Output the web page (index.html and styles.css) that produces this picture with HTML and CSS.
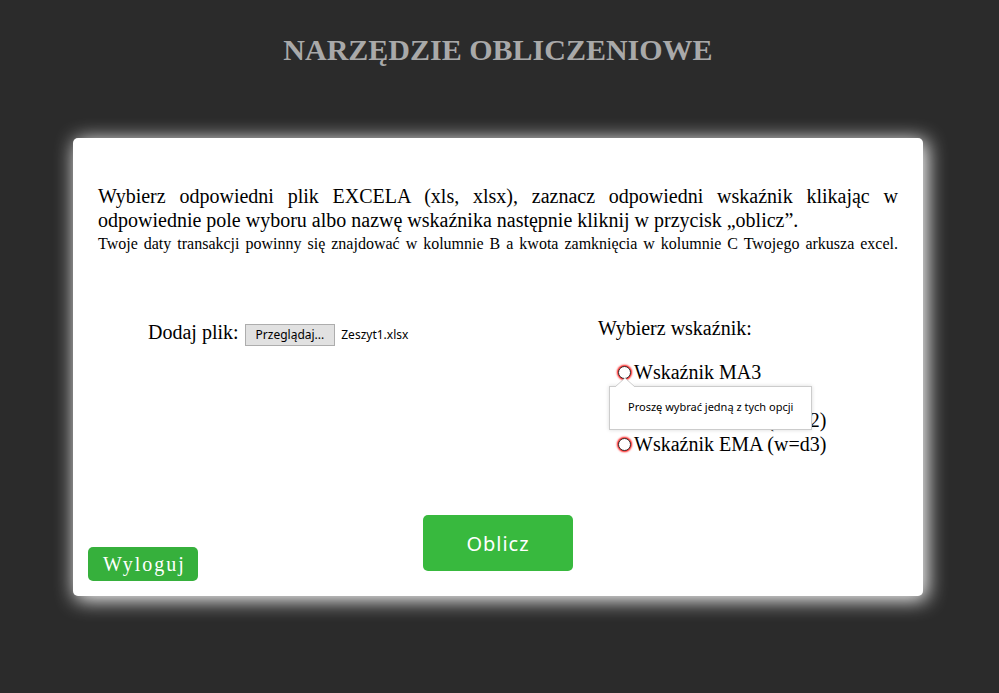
FILE: index.html
```html
<!DOCTYPE html>
<html lang="pl">
<head>
<meta charset="utf-8">
<title>Narzędzie obliczeniowe</title>
<link rel="stylesheet" href="styles.css">
</head>
<body>
<h1 class="title">NARZĘDZIE OBLICZENIOWE</h1>
<main class="card">
  <p class="intro">Wybierz odpowiedni plik EXCELA (xls, xlsx), zaznacz odpowiedni wskaźnik klikając w odpowiednie pole wyboru albo nazwę wskaźnika następnie kliknij w przycisk „oblicz”.</p>
  <p class="note">Twoje daty transakcji powinny się znajdować w kolumnie B a kwota zamknięcia w kolumnie C Twojego arkusza excel.</p>
  <form class="form">
    <div class="fields">
      <div class="file">
        <label for="browse">Dodaj plik:</label>
        <button class="browse" id="browse" type="button">Przeglądaj...</button>
        <span class="filename">Zeszyt1.xlsx</span>
      </div>
      <fieldset class="options">
        <legend class="legend">Wybierz wskaźnik:</legend>
        <div class="option option-first">
          <input class="radio" type="radio" name="indicator" id="ma3" required><label for="ma3">Wskaźnik MA3</label>
          <div class="tooltip" role="alert">Proszę wybrać jedną z tych opcji
            <svg class="arrow" viewBox="0 0 20 10" aria-hidden="true"><path d="M0 10 L10 1 L20 10" fill="#fff" stroke="#ccc"/></svg>
          </div>
        </div>
        <div class="option">
          <input class="radio" type="radio" name="indicator" id="ema2"><label for="ema2">Wskaźnik EMA (w=d2)</label>
        </div>
        <div class="option">
          <input class="radio" type="radio" name="indicator" id="ema3"><label for="ema3">Wskaźnik EMA (w=d3)</label>
        </div>
      </fieldset>
    </div>
    <div class="actions">
      <a class="logout" href="#">Wyloguj</a>
      <button class="submit" type="submit">Oblicz</button>
    </div>
  </form>
</main>
</body>
</html>
```
FILE: styles.css
```css
* {
  box-sizing: border-box;
}

body {
  margin: 0;
  padding: 0 27px 96px 24px;
  background: #2b2b2b;
  color: #000;
  font: 20px/24px "Liberation Serif", serif;
}

.title {
  margin: 0;
  padding: 32px 0 70px;
  color: #a9a9a9;
  font-size: 30px;
  line-height: 36px;
  text-align: center;
}

.card {
  max-width: 850px;
  margin: 0 auto;
  padding: 46px 15px 15px;
  border-radius: 5px;
  background: #fff;
  box-shadow: 3px 3px 20px 1px #fff;
}

.intro,
.note {
  margin: 0 10px;
  text-align: justify;
}

.note {
  font-size: 16px;
  text-align-last: justify;
}

.fields {
  display: grid;
  grid-template-columns: 450px 1fr;
  padding: 60px 10px 0 60px;
}

.file {
  display: flex;
  align-items: baseline;
  align-self: start;
  gap: 6px;
  padding-top: 4px;
}

.browse {
  height: 22px;
  padding: 0 10px;
  border: 1px solid #adadad;
  background: #e1e1e1;
  color: #000;
  font: 12px/20px "Noto Sans", sans-serif;
}

.filename {
  font: 12px/20px "Noto Sans", sans-serif;
}

.options {
  min-width: 0;
  margin: 0;
  padding: 0;
  border: 0;
}

.legend {
  padding: 0 0 20px;
}

.option {
  position: relative;
  display: flex;
  align-items: center;
  padding-left: 20px;
}

.option-first {
  margin-bottom: 24px;
}

.radio {
  appearance: none;
  width: 13px;
  height: 13px;
  margin: 0 3px 0 0;
  border: 1px solid #333;
  border-radius: 50%;
  background: #fff;
  box-shadow: 0 0 2px 1px #f00;
}

.tooltip {
  position: absolute;
  z-index: 1;
  top: 26px;
  left: 11px;
  padding: 11px 18px 13px;
  border: 1px solid #ccc;
  background: #fff;
  box-shadow: 0 0 4px rgba(0, 0, 0, 0.15);
  font: 11px/18px "Noto Sans", sans-serif;
  white-space: nowrap;
}

.arrow {
  position: absolute;
  top: -10px;
  left: 5px;
  width: 20px;
  height: 10px;
}

.actions {
  display: grid;
  grid-template-columns: 1fr auto 1fr;
  align-items: end;
  padding-top: 59px;
}

.logout,
.submit {
  border-radius: 5px;
  color: #fff;
  text-align: center;
}

.logout {
  justify-self: start;
  padding: 5px 12px 5px 15px;
  background: #36b03c;
  letter-spacing: 2px;
  text-decoration: none;
}

.submit {
  width: 150px;
  height: 56px;
  margin-bottom: 10px;
  border: 0;
  background: #38b93e;
  font-family: "Noto Sans", sans-serif;
  font-size: 20px;
  letter-spacing: 1px;
}
```
